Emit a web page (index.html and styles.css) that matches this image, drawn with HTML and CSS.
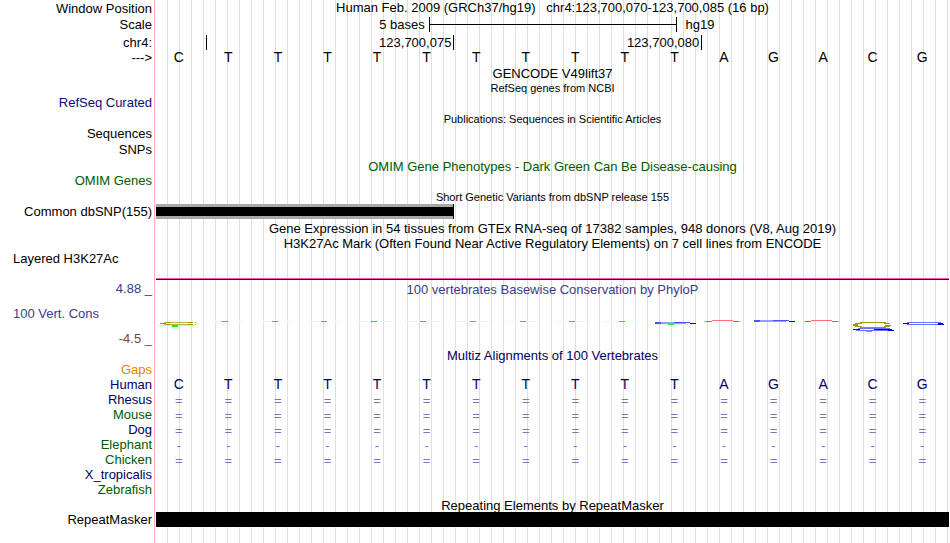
FILE: index.html
```
<!DOCTYPE html>
<html lang="en">
<head>
	<meta charset="UTF-8">
	<meta content="width=device-width, initial-scale=1.0" name="viewport">
	<title>hg19 chr4:123,700,070-123,700,085</title>
	<link rel="stylesheet" href="styles.css">
</head>
<body>
<main class="browser">
	<div class="row position"><div class="label">Window Position</div><div class="title">Human Feb. 2009 (GRCh37/hg19) &nbsp; chr4:123,700,070-123,700,085 (16 bp)</div></div>
	<div class="row scale">
		<div class="label">Scale</div>
		<div class="bases">
			<span class="scaleText">5 bases</span><span class="scaleBar"></span><span class="assembly">hg19</span>
		</div>
	</div>
	<div class="row ruler">
		<div class="label">chr4:</div>
		<div class="bases"><span class="tick first"></span><span class="tick">123,700,075</span><span class="tick">123,700,080</span></div>
	</div>
	<div class="row">
		<div class="label">---&gt;</div>
		<div class="bases seq letters" data-seq="CTTTTTTTTTTAGACG"></div>
	</div>
	<div class="row tall"><div class="title">GENCODE V49lift37</div></div>
	<div class="row short"><div class="title small">RefSeq genes from NCBI</div></div>
	<div class="row"><div class="label blue">RefSeq Curated</div></div>
	<div class="row tall"><div class="title small low">Publications: Sequences in Scientific Articles</div></div>
	<div class="row"><div class="label">Sequences</div></div>
	<div class="row snps"><div class="label">SNPs</div></div>
	<div class="row"><div class="title green low">OMIM Gene Phenotypes - Dark Green Can Be Disease-causing</div></div>
	<div class="row"><div class="label green">OMIM Genes</div></div>
	<div class="row tall"><div class="title small low">Short Genetic Variants from dbSNP release 155</div></div>
	<div class="row"><div class="label">Common dbSNP(155)</div><div class="bases"><span class="variant"></span></div></div>
	<div class="row spaced"><div class="title">Gene Expression in 54 tissues from GTEx RNA-seq of 17382 samples, 948 donors (V8, Aug 2019)</div></div>
	<div class="row"><div class="title">H3K27Ac Mark (Often Found Near Active Regulatory Elements) on 7 cell lines from ENCODE</div></div>
	<div class="row signal"><div class="label left">Layered H3K27Ac</div><div class="baseline"></div></div>
	<div class="row cons">
		<div class="label consLabel">
			<span class="max">4.88 _</span>
			<span class="name">100 Vert. Cons</span>
			<span class="min">-4.5 _</span>
		</div>
		<div class="consTrack">
			<div class="title violet">100 vertebrates Basewise Conservation by PhyloP</div>
			<svg class="logo" viewBox="0 0 793 24" preserveAspectRatio="none" shape-rendering="crispEdges">
				<!-- position 1 -->
				<g fill="none" stroke="#a09a00">
					<path d="M8 6.5H37M8 8.5H37" stroke="#b8b450"/>
					<path d="M4 7.5H10M10 6.5H14M32 6.5H37M10 8.5H14M32 8.5H37"/>
					<path d="M38 6.5H41M38 8.5H41" stroke="#dedca0"/>
				</g>
				<path d="M2 9.5H38" stroke="#c8f8c8"/>
				<path d="M16 9h6v2h-6z" fill="#0f0"/>
				<!-- positions 2-10 -->
				<g id="weak"></g>
				<!-- position 11 -->
				<path d="M505 6.5H534M505 7.5H530" stroke="#9a9aff"/>
				<path d="M499 6.5H505M499 7.5H505M518 6.5H534" stroke="#5050f8"/>
				<path d="M534 7.5H540" stroke="#00c"/>
				<path d="M499 8.5H536" stroke="#d8fad8"/>
				<path d="M512 8.5H518" stroke="#0f0"/>
				<!-- positions 12-14 -->
				<g id="a1">
					<path d="M548 5.5H553M580 5.5H585" stroke="#ffc0c0"/>
					<path d="M550 5.5H556M577 5.5H583" stroke="#f44"/>
					<path d="M556 4.5H577" stroke="#ff7070"/>
				</g>
				<use href="#a1" x="99"/>
				<path d="M598 4.5H633M598 5.5H630" stroke="#9a9aff"/>
				<path d="M598 4.5H604M598 5.5H604M617 4.5H633" stroke="#5050f8"/>
				<path d="M633 5.5H639" stroke="#00c"/>
				<!-- position 15 -->
				<path d="M704 6.5H730M704 11.5H730" stroke="#a09a00"/>
				<path d="M699 7.5H706M728 7.5H734M699 10.5H706M728 10.5H734M697 8.5H702M697 9.5H702M729 9.5H735" stroke="#a09a00"/>
				<path d="M702 12.5H734M700 14.5H736" stroke="#7070ff"/>
				<path d="M697 13.5H704M718 13.5H736M732 14.5H738" stroke="#0000e0"/>
				<path d="M710 15.5H716" stroke="#0f0"/>
				<!-- position 16 -->
				<path d="M751 6.5H785M751 8.5H788" stroke="#7070ff"/>
				<path d="M747 7.5H753M782 7.5H787M782 8.5H788" stroke="#0000e0"/>
			</svg>
		</div>
	</div>
	<div class="row"><div class="title navy">Multiz Alignments of 100 Vertebrates</div></div>
	<div class="align">
		<div class="row"><div class="label orange">Gaps</div></div>
		<div class="row"><div class="label navy">Human</div><div class="bases seq letters navy" data-seq="CTTTTTTTTTTAGACG"></div></div>
		<div class="row"><div class="label navy">Rhesus</div><div class="bases seq gap" data-seq="================"></div></div>
		<div class="row"><div class="label green">Mouse</div><div class="bases seq gap" data-seq="================"></div></div>
		<div class="row"><div class="label navy">Dog</div><div class="bases seq gap" data-seq="================"></div></div>
		<div class="row"><div class="label green">Elephant</div><div class="bases seq gap" data-seq="----------------"></div></div>
		<div class="row"><div class="label green">Chicken</div><div class="bases seq gap" data-seq="================"></div></div>
		<div class="row"><div class="label navy">X_tropicalis</div></div>
		<div class="row"><div class="label green">Zebrafish</div></div>
	</div>
	<div class="row"><div class="title low">Repeating Elements by RepeatMasker</div></div>
	<div class="row"><div class="label">RepeatMasker</div><div class="repeat"></div></div>
</main>
<script src="tracks.js"></script>
</body>
</html>
```
FILE: styles.css
```
* {
	box-sizing: border-box;
}
body {
	margin: 0;
	background: #fff;
	color: #000;
	font-family: "Liberation Sans", Arial, Helvetica, sans-serif;
	font-size: 13px;
	line-height: 15px;
}
/* label column, red divider, then a guide line every 12px */
.browser {
	min-height: 100vh;
	padding-right: 1px;
	background:
		linear-gradient(#ffb4b4, #ffb4b4) 154px 0 / 1px 100% no-repeat,
		linear-gradient(#fff, #fff) 0 0 / 160px 100% no-repeat,
		linear-gradient(to right, #dcdcf8 1px, transparent 1px) 167px 0 / 12px 100%;
}
.row {
	display: grid;
	grid-template-columns: 156px 1fr;
	align-items: center;
	height: 15px;
	white-space: nowrap;
}
.label {
	grid-column: 1;
	padding-right: 4px;
	text-align: right;
}
.label.left {
	padding-left: 13px;
	text-align: left;
}
.title {
	grid-column: 2;
	text-align: center;
}
.small {
	font-size: 11px;
}
.low, .gap {
	height: 15px;
	line-height: 17px;
}
.tall, .position, .ruler {
	height: 16px;
}
.position .title {
	align-self: start;
}
.short {
	height: 14px;
}
.snps {
	height: 17px;
}
.spaced {
	margin-top: 2px;
}
.blue {
	color: #0c0c78;
}
.navy {
	color: #000064;
}
.green {
	color: #005a00;
}
.violet {
	color: #3c3c8c;
}
.orange {
	color: #e68200;
}
.bases {
	display: grid;
	grid-template-columns: repeat(16, 1fr);
	align-items: center;
}
/* scale and ruler */
.scale {
	height: 17px;
}
.scale .bases {
	display: flex;
}
.scaleText {
	width: 34.4%;
	padding-right: 4px;
	text-align: right;
}
.scaleBar {
	width: 31.25%;
	height: 15px;
	border: solid #000;
	border-width: 0 1px;
	background: linear-gradient(#000, #000) 0 7px / 100% 1px no-repeat;
}
.assembly {
	padding-left: 9px;
}
.ruler {
	margin-top: 1px;
}
.ruler .bases {
	margin-left: 1px;
	margin-right: -1px;
}
.tick {
	grid-column: span 5;
	height: 15px;
	padding-right: 2px;
	border-right: 1px solid #000;
	text-align: right;
}
.tick.first {
	grid-column: span 1;
}
.seq span {
	padding-right: 4px;
	text-align: center;
}
.letters {
	font-size: 14px;
}
.gap {
	color: #7878b4;
}
/* items */
.variant {
	grid-column: span 6;
	height: 15px;
	border: solid #a8a8a8;
	border-width: 3px 0;
	background: #000;
	box-shadow: 1px 0 #000;
}
.repeat {
	height: 15px;
	background: #000;
}
.signal {
	height: 29px;
	align-items: start;
}
.baseline {
	align-self: end;
	height: 2px;
	border-top: 1px solid #ff50c8;
	background: #3c003c;
}
.cons {
	height: 68px;
	align-items: stretch;
}
.consLabel {
	display: flex;
	flex-direction: column;
	justify-content: space-between;
	padding-top: 1px;
	padding-bottom: 2px;
	color: #3c3c8c;
}
.consLabel .name {
	padding-left: 13px;
	text-align: left;
}
.consLabel .min {
	color: #8c3c3c;
}
.consTrack {
	padding-top: 2px;
}
.logo {
	display: block;
	width: 100%;
	height: 24px;
	margin-top: 19px;
}
.align {
	margin-top: -1px;
}
```
FILE: tracks.js
```
document.querySelectorAll('.seq').forEach(row => {
	row.innerHTML = [...row.dataset.seq].map(c => `<span>${c}</span>`).join('');
});

// near-zero scores: a thin green stroke under each T
let strokes = '';
for (let i = 0; i < 9; i++) {
	const x = 51 + Math.round(i * 49.6);
	strokes += `<path d="M${x} 5.5h36" stroke="#e8fae8"/><path d="M${x + 15} 5.5h6" stroke="#0e0"/>`;
}
document.getElementById('weak').innerHTML = strokes;
```
